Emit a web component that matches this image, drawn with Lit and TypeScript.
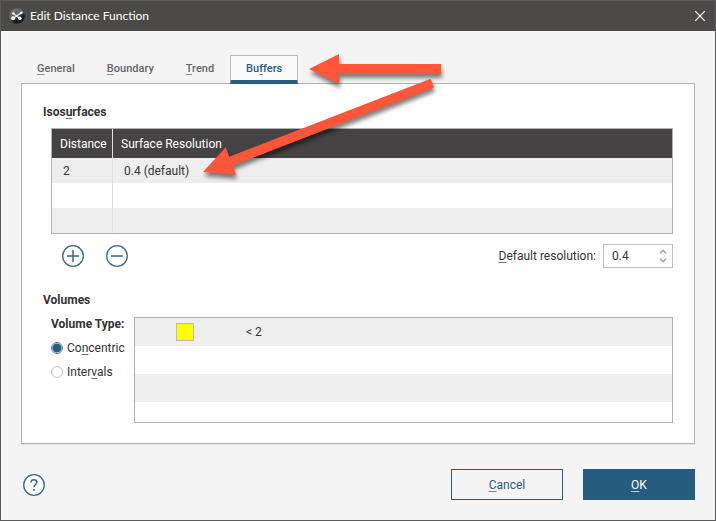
import { LitElement, html, css, svg } from "lit";
import { customElement, state } from "lit/decorators.js";
import { classMap } from "lit/directives/class-map.js";

/** A caption with one underlined mnemonic letter. */
const mnemonic = (before: string, key: string, after: string) =>
  html`${before}<span class="key">${key}</span>${after}`;

const TABS: [string, string, string][] = [
  ["", "G", "eneral"],
  ["", "B", "oundary"],
  ["", "T", "rend"],
  ["Bu", "f", "fers"],
];

@customElement("app-root")
export class AppRoot extends LitElement {
  @state() private activeTab = 3;

  static styles = css`
    :host {
      display: block;
      font: 12px/16px Roboto, sans-serif;
      color: #333;
    }
    * {
      box-sizing: border-box;
    }
    button,
    input {
      font: inherit;
      color: inherit;
      margin: 0;
      border-radius: 0;
    }
    button {
      padding: 0;
      border: none;
      background: none;
    }
    svg {
      display: block;
    }
    .key {
      text-decoration: underline 1px;
      text-decoration-color: color-mix(in srgb, currentColor 70%, transparent);
      text-underline-offset: 2px;
      text-decoration-skip-ink: none;
    }
    .dialog {
      position: relative;
      display: flex;
      flex-direction: column;
      min-height: 100vh;
      border: 1px solid #5a5a5a;
      background: #f4f4f4;
    }
    .titlebar {
      display: flex;
      align-items: center;
      gap: 5px;
      height: 30px;
      padding: 0 10px 0 8px;
      background: #4b4a48;
      color: #fff;
    }
    .title {
      flex: 1;
      margin: 0;
      font: 12px/16px Lato, sans-serif;
    }
    .tabs {
      display: flex;
      align-items: flex-end;
      margin: 24px 20px 0;
    }
    .tab {
      height: 28px;
      padding: 0 16px;
      color: #666;
      font-size: 11px;
      font-weight: 500;
    }
    .tab.active {
      position: relative;
      height: 29px;
      margin-bottom: -1px;
      padding: 1px 15px 0;
      border: 1px solid #b0bcc8;
      border-bottom: 4px solid #265c80;
      background: #fafafa;
      color: #265c80;
    }
    .panel {
      flex: 1;
      display: flex;
      flex-direction: column;
      margin: 0 20px;
      padding: 20px 21px;
      border: 1px solid #b2b2b2;
      background: #fff;
      box-shadow: 0 1px #e4e4e4;
    }
    h2 {
      margin: 0;
      font-size: 12px;
      font-weight: 700;
      line-height: 16px;
    }
    .section {
      margin-left: 8px;
    }
    .grid {
      margin-top: 8px;
      border: 1px solid #b2b2b2;
    }
    table {
      width: 100%;
      border-spacing: 0;
      table-layout: fixed;
    }
    th {
      height: 29px;
      padding: 0 8px;
      background: #454343;
      color: #fff;
      font-weight: 400;
      text-align: left;
    }
    td {
      height: 25px;
      padding: 0 11px;
    }
    .narrow {
      width: 61px;
      padding-right: 0;
      border-right: 1px solid #e0e0e0;
    }
    tbody tr:nth-child(odd) {
      background: #eee;
    }
    .tools {
      display: flex;
      align-items: center;
      margin-top: 10px;
    }
    .round {
      width: 22px;
      height: 22px;
      margin-left: 11px;
    }
    .round + .round {
      margin-left: 22px;
    }
    .tools label {
      margin-left: auto;
      padding-right: 7px;
    }
    .spin {
      display: flex;
      width: 70px;
      height: 24px;
      border: 1px solid #c0c0c0;
      background: #fff;
    }
    .spin input {
      flex: 1;
      min-width: 0;
      padding: 0 0 0 8px;
      border: none;
      background: none;
    }
    .steps {
      display: flex;
      flex-direction: column;
      justify-content: center;
      gap: 4px;
      width: 13px;
    }
    .volumes {
      margin-top: 24px;
    }
    .split {
      flex: 1;
      display: flex;
      margin-top: 9px;
    }
    fieldset {
      width: 83px;
      margin: 0;
      padding: 0;
      border: none;
      line-height: 14px;
      white-space: nowrap;
    }
    legend {
      padding: 0;
      font-weight: 700;
    }
    .choice {
      display: flex;
      align-items: center;
      gap: 4px;
      margin-top: 10px;
    }
    .choice input {
      appearance: none;
      width: 12px;
      height: 12px;
      border: 1px solid #c4c4c4;
      border-radius: 50%;
      background: #fff;
    }
    .choice input:checked {
      border-color: #4c7a99;
      background: radial-gradient(circle, #265c80 4px, #fff 5px);
    }
    .bands {
      flex: 1;
      display: flex;
      flex-direction: column;
      margin: 0;
      padding: 0;
      border: 1px solid #b2b2b2;
      list-style: none;
    }
    .band {
      display: flex;
      align-items: center;
      height: 28px;
    }
    .band:last-child {
      flex: 1;
      height: auto;
      min-height: 20px;
    }
    .band:nth-child(odd) {
      background: #eee;
    }
    .swatch {
      width: 18px;
      height: 18px;
      margin: 0 52px 0 41px;
      border: 1px solid #bbb;
      background: #ff0;
    }
    .footer {
      display: flex;
      align-items: center;
      gap: 20px;
      padding: 25px 20px 20px;
    }
    .help {
      margin: 0 auto 0 2px;
    }
    .action {
      width: 112px;
      height: 31px;
      border: 1px solid #265c80;
      color: #265c80;
    }
    .primary {
      background: #265c80;
      color: #fff;
    }
    .callouts {
      position: absolute;
      top: -1px;
      left: -1px;
      overflow: visible;
      pointer-events: none;
      filter: drop-shadow(1px 4px 2px rgb(0 0 0 / 0.5));
    }
  `;

  private circle(content: unknown) {
    return html`<svg width="22" height="22" viewBox="0 0 22 22" fill="none" stroke="#35698c">
      <circle cx="11" cy="11" r="10.3" fill="#fff" stroke-width="1.3" />
      ${content}
    </svg>`;
  }

  render() {
    return html`
      <main class="dialog">
        <header class="titlebar">
          <svg width="16" height="16" viewBox="0 0 16 16">
            <defs>
              <linearGradient id="ball" x1="0.2" y1="0" x2="0.8" y2="1">
                <stop offset="0" stop-color="#777" />
                <stop offset="0.5" stop-color="#5a5a5a" />
                <stop offset="0.65" stop-color="#1c1e20" />
                <stop offset="1" stop-color="#141618" />
              </linearGradient>
            </defs>
            <circle cx="8" cy="8" r="7.8" fill="url(#ball)" />
            <path d="M4.2 10.3 12.6 4.6M4.4 5.6 10.8 10.4" stroke="#e4e4e4" stroke-width="1.3" />
            <g fill="#fff">
              <circle cx="4.4" cy="5.4" r="1.2" />
              <circle cx="12.4" cy="4.6" r="1.2" />
              <circle cx="4.2" cy="10.3" r="2" />
              <circle cx="10.8" cy="10.3" r="1.8" />
            </g>
          </svg>
          <h1 class="title">Edit Distance Function</h1>
          <button aria-label="Close">
            <svg width="10" height="10" viewBox="0 0 10 10" stroke="#fff" stroke-width="1.2">
              <path d="M0.3 0.3 9.7 9.7M9.7 0.3 0.3 9.7" />
            </svg>
          </button>
        </header>

        <div class="tabs" role="tablist">
          ${TABS.map(
            ([a, k, b], i) => html`<button
              role="tab"
              aria-selected=${i === this.activeTab}
              class=${classMap({ tab: true, active: i === this.activeTab })}
              @click=${() => (this.activeTab = i)}
            >${mnemonic(a, k, b)}</button>`
          )}
        </div>

        <section class="panel">
          <h2>${mnemonic("Isos", "u", "rfaces")}</h2>
          <div class="section">
            <div class="grid">
              <table>
                <thead>
                  <tr><th class="narrow">Distance</th><th>Surface Resolution</th></tr>
                </thead>
                <tbody>
                  <tr><td class="narrow">2</td><td>0.4 (default)</td></tr>
                  <tr><td class="narrow"></td><td></td></tr>
                  <tr><td class="narrow"></td><td></td></tr>
                </tbody>
              </table>
            </div>
            <div class="tools">
              <button class="round" aria-label="Add">
                ${this.circle(svg`<path d="M5 11H17M11 5V17" stroke-width="1.5" />`)}
              </button>
              <button class="round" aria-label="Remove">
                ${this.circle(svg`<path d="M5 11H17" stroke-width="1.5" />`)}
              </button>
              <label for="resolution">${mnemonic("", "D", "efault resolution:")}</label>
              <div class="spin">
                <input id="resolution" type="text" inputmode="decimal" value="0.4" />
                <div class="steps">
                  <button aria-label="Increase">
                    <svg width="8" height="5" viewBox="0 0 8 5" fill="none" stroke="#a0a0a0" stroke-width="1.4">
                      <path d="M1 4.2 4 1.2 7 4.2" />
                    </svg>
                  </button>
                  <button aria-label="Decrease">
                    <svg width="8" height="5" viewBox="0 0 8 5" fill="none" stroke="#a0a0a0" stroke-width="1.4">
                      <path d="M1 0.8 4 3.8 7 0.8" />
                    </svg>
                  </button>
                </div>
              </div>
            </div>
          </div>

          <h2 class="volumes">Volumes</h2>
          <div class="section split">
            <fieldset>
              <legend>Volume Type:</legend>
              <label class="choice">
                <input type="radio" name="type" checked />
                <span>${mnemonic("Co", "n", "centric")}</span>
              </label>
              <label class="choice">
                <input type="radio" name="type" />
                <span>${mnemonic("Inter", "v", "als")}</span>
              </label>
            </fieldset>
            <ul class="bands">
              <li class="band"><span class="swatch"></span>&lt; 2</li>
              <li class="band"></li>
              <li class="band"></li>
              <li class="band"></li>
            </ul>
          </div>
        </section>

        <footer class="footer">
          <button class="help" aria-label="Help">
            ${this.circle(svg`
              <path d="M8 8.6C8 6.7 9.2 5.8 10.9 5.8S13.9 6.8 13.9 8.3C13.9 10.4 11 10.6 11 13.2" stroke-width="1.5" />
              <circle cx="11" cy="15.8" r="1" fill="#35698c" stroke="none" />`)}
          </button>
          <button class="action">${mnemonic("", "C", "ancel")}</button>
          <button class="action primary">${mnemonic("", "O", "K")}</button>
        </footer>

        <svg class="callouts" width="450" height="190" viewBox="0 0 450 190" fill="#ff5538" aria-hidden="true">
          <path d="M309 69 339 54V64H441V74H339V84Z" />
          <path d="M203 172 225.7 147.3 229.3 156.7 430.7 78.7 434 87.5 233 165.5 236 175Z" />
        </svg>
      </main>
    `;
  }
}
